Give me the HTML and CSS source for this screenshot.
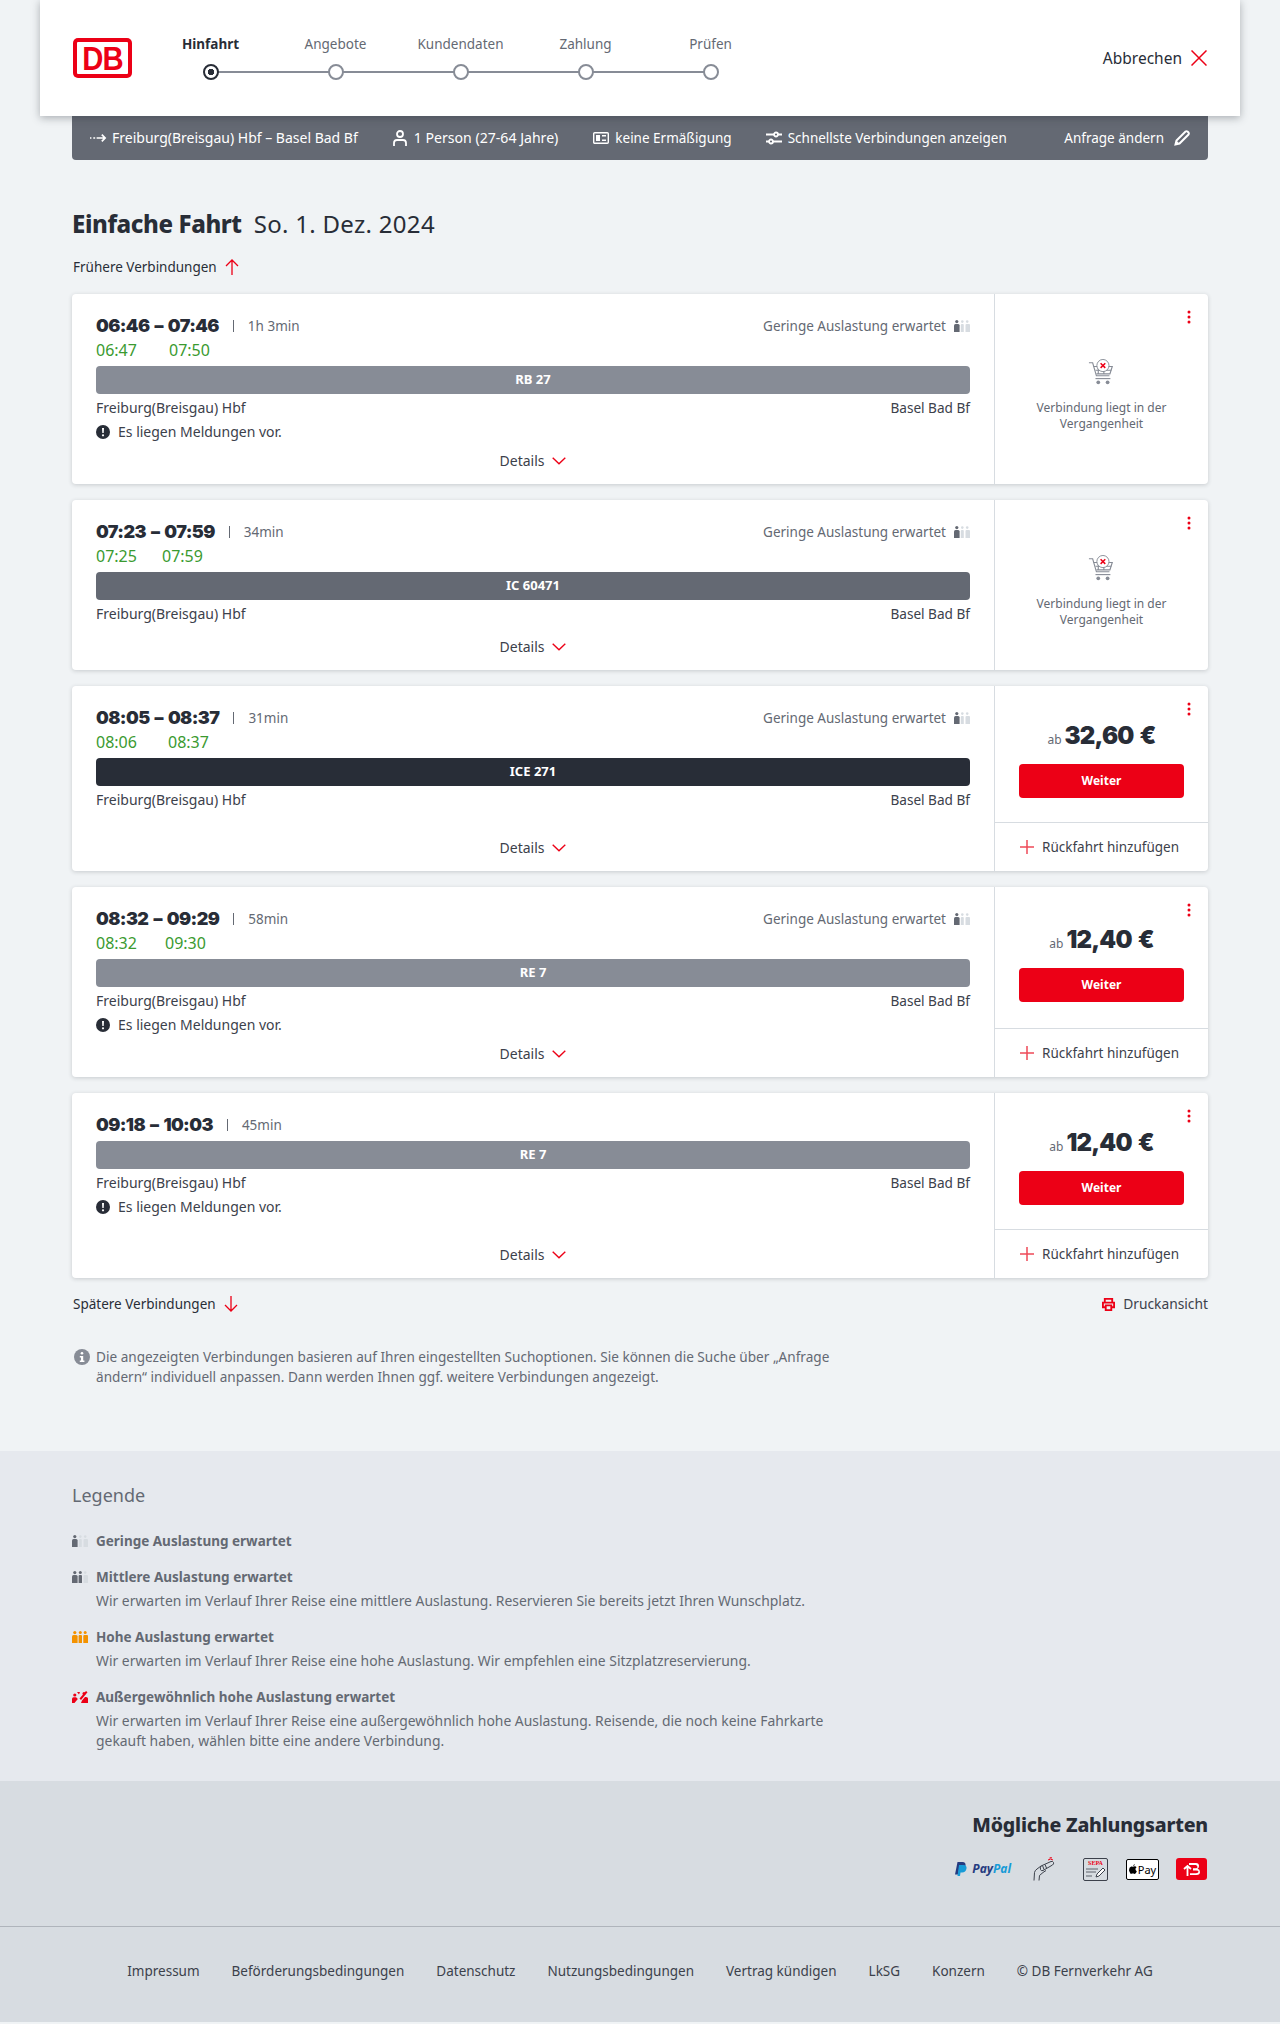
FILE: index.html
```html
<!DOCTYPE html>
<html lang="de">
<head>
<meta charset="utf-8">
<title>Hinfahrt</title>
<link rel="stylesheet" href="styles.css">
</head>
<body>
<svg class="defs" width="0" height="0" aria-hidden="true">
  <symbol id="occ-low" viewBox="0 0 16 12"><circle cx="2.8" cy="1.6" r="1.6" fill="#646973"/><path d="M0 5.5q0-1.5 1.5-1.5h2.6q1.500 0 1.500 1.500V12H0z" fill="#646973"/><circle cx="8.300" cy="1.600" r="1.300" fill="#d7dce1"/><path d="M6.800 5q0-1 1-1h1q1 0 1 1v7h-3z" fill="#d7dce1"/><circle cx="13.200" cy="1.600" r="1.300" fill="#d7dce1"/><path d="M11.500 5q0-1 1-1h2.500q1 0 1 1v7h-4.500z" fill="#d7dce1"/></symbol>
  <symbol id="occ-mid" viewBox="0 0 16 12"><circle cx="2.800" cy="1.600" r="1.600" fill="#646973"/><path d="M0 5.500q0-1.500 1.500-1.500h2.600q1.500 0 1.500 1.500V12H0z" fill="#646973"/><circle cx="8.300" cy="1.600" r="1.500" fill="#646973"/><path d="M6.600 5q0-1 1-1h1.400q1 0 1 1v7H6.600z" fill="#646973"/><circle cx="13.200" cy="1.600" r="1.300" fill="#d7dce1"/><path d="M11.500 5q0-1 1-1h2.500q1 0 1 1v7h-4.500z" fill="#d7dce1"/></symbol>
  <symbol id="occ-high" viewBox="0 0 16 12"><g fill="#f39200"><circle cx="2.800" cy="1.600" r="1.600"/><path d="M0 5.500q0-1.500 1.500-1.500h2.600q1.500 0 1.500 1.500V12H0z"/><circle cx="8.300" cy="1.600" r="1.500"/><path d="M6.600 5q0-1 1-1h1.400q1 0 1 1v7H6.600z"/><circle cx="13.200" cy="1.600" r="1.500"/><path d="M11.300 5q0-1 1-1h2.700q1 0 1 1v7h-4.700z"/></g></symbol>
  <symbol id="occ-max" viewBox="0 0 16 12"><g fill="#ec0016"><circle cx="2.800" cy="4" r="1.600"/><path d="M0 8q0-1.800 1.500-1.800h2.600L5.800 8 2.500 12H0z"/><path d="M5 1h3L7 3.500zM7.500 7.500 14 0l1.500 1.300L9 9zM10 9.500l3-3.500h1q2 0 2 1.500V12H9z"/><circle cx="12" cy="2.500" r="1.500"/></g></symbol>
  <symbol id="cart" viewBox="0 0 30 30"><g fill="none" stroke="#878c96" stroke-width="1.200"><path d="M1 4h4l4 14h14"/><path d="M6 8h20l-2.500 8H9"/><path d="M11 8v8M17 12v4M8 12h6M19 12h6"/></g><circle cx="16" cy="7" r="6.500" fill="#fff" stroke="#878c96"/><path d="M13.500 4.500l5 5m0-5l-5 5" stroke="#ec0016" stroke-width="1.600"/><circle cx="11" cy="25" r="2" fill="#878c96"/><circle cx="21" cy="25" r="2" fill="#878c96"/><path d="M8 21h16" stroke="#878c96" stroke-width="1.200"/></symbol>
  <symbol id="kebab" viewBox="0 0 4 14"><g fill="#ec0016"><circle cx="2" cy="2" r="1.500"/><circle cx="2" cy="7" r="1.500"/><circle cx="2" cy="12" r="1.500"/></g></symbol>
  <symbol id="chev" viewBox="0 0 14 8"><path d="M.7.8 7 6.800 13.300.8" fill="none" stroke="#ec0016" stroke-width="1.400"/></symbol>
  <symbol id="warn" viewBox="0 0 14 14"><circle cx="7" cy="7" r="7" fill="#282d37"/><path d="M6 3h2l-.300 5H6.300z" fill="#fff"/><circle cx="7" cy="10.300" r="1.100" fill="#fff"/></symbol>
  <symbol id="plus" viewBox="0 0 14 14"><path d="M7 0v14M0 7h14" stroke="#ee4a58" stroke-width="1.500"/></symbol>
</svg>

<header class="topbar">
  <div class="logo"><div class="logo-box"><span class="logo-text">DB</span></div></div>
  <ol class="steps">
    <li class="step step-active"><span class="step-label">Hinfahrt</span><span class="step-dot"></span></li>
    <li class="step"><span class="step-label">Angebote</span><span class="step-dot"></span></li>
    <li class="step"><span class="step-label">Kundendaten</span><span class="step-dot"></span></li>
    <li class="step"><span class="step-label">Zahlung</span><span class="step-dot"></span></li>
    <li class="step step-last"><span class="step-label">Prüfen</span><span class="step-dot"></span></li>
  </ol>
  <a class="cancel">Abbrechen
    <svg class="cancel-x" viewBox="0 0 16 16" width="16" height="16"><path d="M.5.500l15 15m0-15l-15 15" stroke="#ec0016" stroke-width="1.500"/></svg>
  </a>
</header>

<div class="infobar">
  <span class="info-item info-route"><svg viewBox="0 0 18 10" width="17" height="10"><path d="M0 5h1.500M3.500 5h2" stroke="#fff" stroke-width="1.500"/><path d="M7 5h9M12.500 1.500 16 5l-3.500 3.500" stroke="#fff" stroke-width="1.800" fill="none"/></svg>Freiburg(Breisgau) Hbf – Basel Bad Bf</span>
  <span class="info-item info-person"><svg viewBox="0 0 14 16" width="14" height="16"><circle cx="7" cy="4" r="3" fill="none" stroke="#fff" stroke-width="1.800"/><path d="M1 16v-3q0-3 3-3h6q3 0 3 3v3" fill="none" stroke="#fff" stroke-width="1.800"/></svg>1 Person (27-64 Jahre)</span>
  <span class="info-item info-card"><svg viewBox="0 0 16 12" width="16" height="12"><rect x=".7" y=".7" width="14.600" height="10.600" rx="1" fill="none" stroke="#fff" stroke-width="1.400"/><path d="M3 3h4v6H3zM9 3h4v1.500H9zM9 7.500h4V9H9z" fill="#fff"/></svg>keine Ermäßigung</span>
  <span class="info-item info-filter"><svg viewBox="0 0 16 14" width="16" height="14"><path d="M0 3.500h8M12 3.500h4M0 10.500h3M7 10.500h9" stroke="#fff" stroke-width="1.800"/><circle cx="10" cy="3.500" r="2" fill="none" stroke="#fff" stroke-width="1.800"/><circle cx="5" cy="10.500" r="2" fill="none" stroke="#fff" stroke-width="1.800"/></svg>Schnellste Verbindungen anzeigen</span>
  <span class="info-change">Anfrage ändern<svg viewBox="0 0 16 16" width="16" height="16"><path d="M1.500 14.500l1-4L11.500 1.500q1-.7 2 0l1 1q.7 1 0 2L5.500 13.500z" fill="none" stroke="#fff" stroke-width="2"/><path d="M1 15l1.200-4.500L5.500 13.800z" fill="#fff"/></svg></span>
</div>

<main class="content">
  <h1 class="title"><b class="title-main">Einfache Fahrt</b><span class="title-date">So. 1. Dez. 2024</span></h1>
  <a class="more more-up">Frühere Verbindungen <svg viewBox="0 0 14 16" width="14" height="16"><path d="M7 16V1M1 7l6-6 6 6" fill="none" stroke="#ec0016" stroke-width="1.300"/></svg></a>

  <article class="card card-a">
    <div class="trip">
      <div class="trip-top"><span class="times">06:46 – 07:46</span><span class="sep"></span><span class="dur">1h 3min</span><span class="load">Geringe Auslastung erwartet<svg class="occ"><use href="#occ-low"/></svg></span></div>
      <div class="real"><span class="real-a">06:47</span><span>07:50</span></div>
      <div class="bar bar-regio">RB 27</div>
      <div class="stations"><span>Freiburg(Breisgau) Hbf</span><span>Basel Bad Bf</span></div>
      <div class="msg"><svg class="warn"><use href="#warn"/></svg>Es liegen Meldungen vor.</div>
      <a class="details">Details<svg class="chev"><use href="#chev"/></svg></a>
    </div>
    <aside class="side side-past">
      <svg class="kebab"><use href="#kebab"/></svg>
      <svg class="cart"><use href="#cart"/></svg>
      <p class="past">Verbindung liegt in der Vergangenheit</p>
    </aside>
  </article>

  <article class="card card-b">
    <div class="trip">
      <div class="trip-top"><span class="times">07:23 – 07:59</span><span class="sep"></span><span class="dur">34min</span><span class="load">Geringe Auslastung erwartet<svg class="occ"><use href="#occ-low"/></svg></span></div>
      <div class="real"><span class="real-a real-b">07:25</span><span>07:59</span></div>
      <div class="bar bar-ic">IC 60471</div>
      <div class="stations"><span>Freiburg(Breisgau) Hbf</span><span>Basel Bad Bf</span></div>
      <a class="details">Details<svg class="chev"><use href="#chev"/></svg></a>
    </div>
    <aside class="side side-past">
      <svg class="kebab"><use href="#kebab"/></svg>
      <svg class="cart"><use href="#cart"/></svg>
      <p class="past">Verbindung liegt in der Vergangenheit</p>
    </aside>
  </article>

  <article class="card card-c">
    <div class="trip">
      <div class="trip-top"><span class="times">08:05 – 08:37</span><span class="sep"></span><span class="dur">31min</span><span class="load">Geringe Auslastung erwartet<svg class="occ"><use href="#occ-low"/></svg></span></div>
      <div class="real"><span class="real-a real-c">08:06</span><span>08:37</span></div>
      <div class="bar bar-ice">ICE 271</div>
      <div class="stations"><span>Freiburg(Breisgau) Hbf</span><span>Basel Bad Bf</span></div>
      <a class="details">Details<svg class="chev"><use href="#chev"/></svg></a>
    </div>
    <aside class="side">
      <svg class="kebab"><use href="#kebab"/></svg>
      <div class="offer"><div class="price"><small class="ab">ab</small>32,60 €</div><a class="btn">Weiter</a></div>
      <a class="return"><svg class="plus"><use href="#plus"/></svg>Rückfahrt hinzufügen</a>
    </aside>
  </article>

  <article class="card card-a">
    <div class="trip">
      <div class="trip-top"><span class="times">08:32 – 09:29</span><span class="sep"></span><span class="dur">58min</span><span class="load">Geringe Auslastung erwartet<svg class="occ"><use href="#occ-low"/></svg></span></div>
      <div class="real"><span class="real-a real-d">08:32</span><span>09:30</span></div>
      <div class="bar bar-regio">RE 7</div>
      <div class="stations"><span>Freiburg(Breisgau) Hbf</span><span>Basel Bad Bf</span></div>
      <div class="msg"><svg class="warn"><use href="#warn"/></svg>Es liegen Meldungen vor.</div>
      <a class="details">Details<svg class="chev"><use href="#chev"/></svg></a>
    </div>
    <aside class="side">
      <svg class="kebab"><use href="#kebab"/></svg>
      <div class="offer"><div class="price"><small class="ab">ab</small>12,40 €</div><a class="btn">Weiter</a></div>
      <a class="return"><svg class="plus"><use href="#plus"/></svg>Rückfahrt hinzufügen</a>
    </aside>
  </article>

  <article class="card card-c">
    <div class="trip">
      <div class="trip-top trip-top-solo"><span class="times">09:18 – 10:03</span><span class="sep"></span><span class="dur">45min</span></div>
      <div class="bar bar-regio">RE 7</div>
      <div class="stations"><span>Freiburg(Breisgau) Hbf</span><span>Basel Bad Bf</span></div>
      <div class="msg"><svg class="warn"><use href="#warn"/></svg>Es liegen Meldungen vor.</div>
      <a class="details">Details<svg class="chev"><use href="#chev"/></svg></a>
    </div>
    <aside class="side">
      <svg class="kebab"><use href="#kebab"/></svg>
      <div class="offer"><div class="price"><small class="ab">ab</small>12,40 €</div><a class="btn">Weiter</a></div>
      <a class="return"><svg class="plus"><use href="#plus"/></svg>Rückfahrt hinzufügen</a>
    </aside>
  </article>

  <div class="below">
    <a class="more">Spätere Verbindungen <svg viewBox="0 0 14 16" width="14" height="16"><path d="M7 0v15M1 9l6 6 6-6" fill="none" stroke="#ec0016" stroke-width="1.300"/></svg></a>
    <a class="print"><svg viewBox="0 0 14 14" width="13" height="13"><path d="M3 5V1h8v4M3 10H1V5h12v5h-2M4 8h6v5H4z" fill="none" stroke="#ec0016" stroke-width="2"/></svg>Druckansicht</a>
  </div>

  <div class="note">
    <svg class="note-icon" viewBox="0 0 16 16" width="16" height="16"><circle cx="8" cy="8" r="8" fill="#878c96"/><circle cx="8" cy="4.300" r="1.300" fill="#fff"/><path d="M5.800 7h3.400v4.500h1.200V13H5.800v-1.500H7V8.500H5.800z" fill="#fff"/></svg>
    <p>Die angezeigten Verbindungen basieren auf Ihren eingestellten Suchoptionen. Sie können die Suche über „Anfrage ändern“ individuell anpassen. Dann werden Ihnen ggf. weitere Verbindungen angezeigt.</p>
  </div>
</main>

<section class="legend">
  <h2 class="legend-title">Legende</h2>
  <div class="legend-row"><svg class="occ"><use href="#occ-low"/></svg><div><h3>Geringe Auslastung erwartet</h3></div></div>
  <div class="legend-row"><svg class="occ"><use href="#occ-mid"/></svg><div><h3>Mittlere Auslastung erwartet</h3><p>Wir erwarten im Verlauf Ihrer Reise eine mittlere Auslastung. Reservieren Sie bereits jetzt Ihren Wunschplatz.</p></div></div>
  <div class="legend-row"><svg class="occ"><use href="#occ-high"/></svg><div><h3>Hohe Auslastung erwartet</h3><p>Wir erwarten im Verlauf Ihrer Reise eine hohe Auslastung. Wir empfehlen eine Sitzplatzreservierung.</p></div></div>
  <div class="legend-row"><svg class="occ"><use href="#occ-max"/></svg><div><h3>Außergewöhnlich hohe Auslastung erwartet</h3><p>Wir erwarten im Verlauf Ihrer Reise eine außergewöhnlich hohe Auslastung. Reisende, die noch keine Fahrkarte gekauft haben, wählen bitte eine andere Verbindung.</p></div></div>
</section>

<section class="pay">
  <h2 class="pay-title">Mögliche Zahlungsarten</h2>
  <div class="pay-icons">
    <span class="paypal"><svg viewBox="0 0 12 14" width="12" height="14"><path d="M2.500 0h5q3.500.300 3 3.500Q9.800 7.500 6 7.500H4L3 12.500H0z" fill="#253b80"/><path d="M4 3h4.500q3.500.3 3 3.500Q10.800 10.500 7 10.500H5.500L5 14H2.500z" fill="#179bd7"/></svg><span><b class="pp-a">Pay</b><b class="pp-b">Pal</b></span></span>
    <svg class="pay-card" viewBox="0 0 22 24" width="22" height="24"><g fill="none" stroke="#3c414b" stroke-width="1"><path d="M1 23.500l.5-8q.3-2 2.500-3.500l4-3"/><path d="M6 23.500l.5-5 3.500-3 3-2"/><path d="M8 9l10-4.500q2-.5 2.500 1t-1 2.500L10 13.500q-2 .7-2.500-1T8 9z"/><path d="M9.500 8.500l1.500 4M12 7.500l1.500 3.500"/></g><path d="M15 3q2.500-2 5 0M16.500 1q1.500-.8 2.500 0" fill="none" stroke="#ec0016"/></svg>
    <span class="sepa"><span class="sepa-t">SEPA</span><svg viewBox="0 0 22 12" width="22" height="12"><path d="M1 2h12M1 5h10M1 9h6" stroke="#3c414b" stroke-width=".8"/><path d="M11 10l1-3 6-6 2 2-6 6z" fill="#fff" stroke="#3c414b"/></svg></span>
    <span class="apay"><svg viewBox="0 0 9 11" width="8" height="10"><path d="M6.500 0q.2 1.500-1.800 2.500Q4.600 1 6.500 0zM4.500 3q1-.5 2-.5 1.300 0 2 1Q7 4.500 7.300 6q.2 1.500 1.500 2-1 3-2.300 3-.8 0-1.500-.3-.8-.3-1.500 0Q2.800 11 2 11 .500 9.500 0 7q0-3.500 2.500-4.200 1 0 2 .2z" fill="#000"/></svg>Pay</span>
    <span class="dbpay"><svg viewBox="0 0 18 14" width="18" height="14"><path d="M1 7l3.500-3L8 7M4.500 4v10" fill="none" stroke="#fff" stroke-width="1.800"/><path d="M6 1h7q3 0 3 3 0 2-1.500 2.800 2.500.6 2.500 3.200 0 3-3.500 3H7v-1.800h6q2.500 0 2.500-1.400T13 8.400H10V6.300h3q1.500 0 1.500-1.300T13 2.900H6z" fill="#fff"/></svg></span>
  </div>
</section>

<footer class="foot">
  <a>Impressum</a><a>Beförderungsbedingungen</a><a>Datenschutz</a><a>Nutzungsbedingungen</a><a>Vertrag kündigen</a><a>LkSG</a><a>Konzern</a><span>© DB Fernverkehr AG</span>
</footer>
</body>
</html>
```
FILE: styles.css
```css
* { box-sizing: border-box; }
html, body { margin: 0; padding: 0; }
body {
  background: #f0f3f5;
  color: #282d37;
  font-family: "Noto Sans", "Liberation Sans", sans-serif;
  font-size: 14px;
  line-height: 20px;
  width: 1280px;
}
h1, h2, h3, p, ol { margin: 0; padding: 0; }
svg { display: block; flex: none; }
.defs { position: absolute; }

/* header */
.topbar {
  position: relative;
  z-index: 2;
  margin: 0 40px;
  height: 116px;
  background: #fff;
  box-shadow: 0 2px 8px rgba(40, 45, 55, .35);
  display: flex;
  align-items: center;
  padding: 0 33px;
}
.logo {
  width: 59px;
  height: 40px;
  background: #ec0016;
  border-radius: 5px;
  padding: 4px;
  margin-top: -1px;
}
.logo-box {
  height: 32px;
  background: #fff;
  border-radius: 1px;
  display: flex;
  justify-content: center;
}
.logo-text {
  display: block;
  color: #ec0016;
  font: bold 34px/32px "Liberation Sans", sans-serif;
  letter-spacing: -1px;
  transform: scaleX(.86);
}
.steps {
  list-style: none;
  display: flex;
  margin-left: 16px;
  margin-top: -2px;
}
.step {
  position: relative;
  width: 125px;
  display: flex;
  flex-direction: column;
  align-items: center;
  gap: 10px;
  color: #646973;
  font-size: 13.500px;
}
.step::after {
  content: "";
  position: absolute;
  left: 50%;
  width: 125px;
  bottom: 7px;
  height: 2px;
  background: #878c96;
}
.step-last::after { display: none; }
.step-active { color: #282d37; font-weight: 700; }
.step-dot {
  position: relative;
  z-index: 1;
  width: 16px;
  height: 16px;
  border-radius: 50%;
  background: #fff;
  border: 2px solid #878c96;
}
.step-active .step-dot {
  border-color: #282d37;
  background: radial-gradient(circle, #282d37 0 3px, #fff 3.500px);
}
.cancel {
  margin-left: auto;
  display: flex;
  align-items: center;
  gap: 9px;
  font-size: 15.500px;
}

/* info bar */
.infobar {
  margin: 0 72px;
  height: 44px;
  background: #646973;
  border-radius: 0 0 4px 4px;
  color: #fff;
  display: flex;
  align-items: center;
  padding: 0 18px;
  font-size: 13.500px;
}
.info-item { display: flex; align-items: center; gap: 6px; }
.info-route { gap: 5px; font-size: 14px; }
.info-person { margin-left: 35px; gap: 7px; font-size: 14.100px; }
.info-card { margin-left: 35px; }
.info-filter { margin-left: 34px; }
.info-change { margin-left: auto; display: flex; align-items: center; gap: 10px; }

/* content */
.content { padding: 0 72px; }
.title {
  margin-top: 49px;
  font-size: 24px;
  line-height: 30px;
  font-weight: 400;
  display: flex;
  gap: 12px;
}
.title-main { font-weight: 800; letter-spacing: -.4px; }
.title-date { letter-spacing: .3px; }
.more { display: flex; align-items: center; gap: 8px; font-size: 13.500px; padding-left: 1px; }
.more-up { margin-top: 18px; margin-bottom: 17px; }

.card {
  display: grid;
  grid-template-columns: 1fr 214px;
  background: #fff;
  border-radius: 4px;
  box-shadow: 0 1px 4px rgba(40, 45, 55, .2);
  margin-bottom: 16px;
}
.card-a { height: 190px; }
.card-b { height: 170px; }
.card-c { height: 185px; }
.trip {
  padding: 20px 24px 13px;
  display: flex;
  flex-direction: column;
  min-width: 0;
}
.trip-top { display: flex; align-items: center; height: 24px; }
.trip-top-solo { margin-bottom: 4px; }
.times {
  font-family: Inter, "Noto Sans", sans-serif;
  font-size: 18px;
  font-weight: 900;
  letter-spacing: -.6px;
  word-spacing: 2px;
}
.sep { width: 1px; height: 12px; background: #646973; margin: 0 14px; }
.dur { color: #646973; font-size: 13.500px; }
.load {
  margin-left: auto;
  display: flex;
  align-items: center;
  gap: 8px;
  color: #646973;
  font-size: 13.500px;
}
.occ { width: 16px; height: 12px; }
.real {
  display: flex;
  color: #3a9a30;
  font-size: 16px;
  line-height: 24px;
  height: 24px;
  margin-bottom: 4px;
}
.real-a { width: 73px; }
.real-b { width: 66px; }
.real-c { width: 72px; }
.real-d { width: 69px; }
.bar {
  height: 28px;
  border-radius: 4px;
  color: #fff;
  font-size: 13px;
  font-weight: 700;
  line-height: 27px;
  text-align: center;
}
.bar-regio { background: #878c96; }
.bar-ic { background: #646973; }
.bar-ice { background: #282d37; }
.stations {
  display: flex;
  justify-content: space-between;
  align-items: baseline;
  margin-top: 4px;
  line-height: 20px;
  height: 20px;
  color: #3c414b;
}
.stations span:last-child { font-size: 13.600px; }
.msg {
  display: flex;
  align-items: center;
  gap: 8px;
  margin-top: 4px;
  color: #3c414b;
}
.warn { width: 14px; height: 14px; }
.details {
  margin-top: auto;
  display: flex;
  justify-content: center;
  align-items: center;
  gap: 8px;
  color: #3c414b;
}
.chev { width: 14px; height: 8px; }

.side {
  position: relative;
  border-left: 1px solid #d7dce1;
  display: flex;
  flex-direction: column;
  min-height: 0;
}
.side-past { align-items: center; justify-content: center; padding-top: 12px; }
.kebab {
  position: absolute;
  top: 16px;
  right: 17px;
  width: 4px;
  height: 14px;
}
.cart { width: 28px; height: 28px; }
.past {
  font-size: 12px;
  line-height: 16px;
  color: #646973;
  text-align: center;
  width: 150px;
  margin-top: 13px;
}
.offer {
  flex: 1;
  display: flex;
  flex-direction: column;
  justify-content: center;
  align-items: center;
  padding-top: 10px;
}
.price {
  font-family: Inter, "Noto Sans", sans-serif;
  font-size: 24px;
  line-height: 32px;
  font-weight: 900;
  letter-spacing: -.8px;
  word-spacing: 2px;
  display: flex;
  align-items: baseline;
  gap: 3px;
}
.ab {
  font-family: "Noto Sans", sans-serif;
  font-size: 12px;
  font-weight: 400;
  color: #646973;
  letter-spacing: 0;
}
.btn {
  margin-top: 8px;
  width: 165px;
  height: 34px;
  background: #ec0016;
  border-radius: 4px;
  color: #fff;
  font-size: 12px;
  font-weight: 700;
  line-height: 34px;
  text-align: center;
}
.return {
  flex: none;
  height: 49px;
  border-top: 1px solid #d7dce1;
  display: flex;
  align-items: center;
  padding-left: 25px;
  gap: 8px;
  color: #3c414b;
  font-size: 13.500px;
}
.plus { width: 14px; height: 14px; }

.below {
  display: flex;
  justify-content: space-between;
  margin-top: 2px;
}
.print { display: flex; align-items: center; gap: 8px; color: #3c414b; font-size: 13.800px; }
.note {
  margin-top: 33px;
  display: flex;
  gap: 6px;
  color: #646973;
  width: 785px;
  font-size: 13.600px;
  padding-bottom: 64px;
}
.note-icon { margin: 2px 0 0 2px; }

/* legend */
.legend { background: #e6e9ee; padding: 31px 72px 24px; height: 330px; }
.legend-title {
  font-size: 18px;
  line-height: 26px;
  font-weight: 400;
  color: #646973;
  margin-bottom: 23px;
}
.legend-row { display: flex; gap: 8px; margin-bottom: 16px; color: #646973; }
.legend-row .occ { margin-top: 4px; }
.legend-row h3 { font-size: 13.500px; line-height: 20px; font-weight: 700; }
.legend-row p { width: 760px; margin-top: 4px; font-size: 13.900px; }

/* payment */
.pay {
  background: #d7dce1;
  height: 145px;
  padding: 30px 72px 0;
  text-align: right;
}
.pay-title { font-size: 19.500px; line-height: 28px; font-weight: 800; letter-spacing: -.2px; }
.pay-icons { display: flex; justify-content: flex-end; align-items: center; margin-top: 18px; height: 24px; }
.paypal { display: flex; align-items: center; gap: 5px; font-style: italic; font-size: 12px; }
.pp-a { color: #253b80; }
.pp-b { color: #179bd7; }
.pay-card { margin-left: 22px; }
.sepa {
  margin-left: 28px;
  width: 25px;
  height: 23px;
  border: 1px solid #3c414b;
  border-radius: 2px;
  display: flex;
  flex-direction: column;
  align-items: center;
}
.sepa-t { font: bold 6px/8px "Liberation Serif", serif; color: #ec0016; }
.apay {
  margin-left: 18px;
  width: 33px;
  height: 21px;
  background: #fff;
  border: 1px solid #000;
  border-radius: 2px;
  color: #000;
  font-size: 11px;
  display: flex;
  align-items: center;
  justify-content: center;
  gap: 1px;
  line-height: 1;
}
.dbpay {
  margin-left: 17px;
  margin-right: 1px;
  width: 31px;
  height: 22px;
  background: #ec0016;
  border-radius: 3px;
  display: flex;
  align-items: center;
  justify-content: center;
}

/* footer */
.foot {
  background: #d7dce1;
  border-top: 1px solid #afb4bb;
  height: 96px;
  padding-bottom: 8px;
  display: flex;
  justify-content: center;
  align-items: center;
  gap: 32px;
  font-size: 13.500px;
  color: #3c414b;
}
```
